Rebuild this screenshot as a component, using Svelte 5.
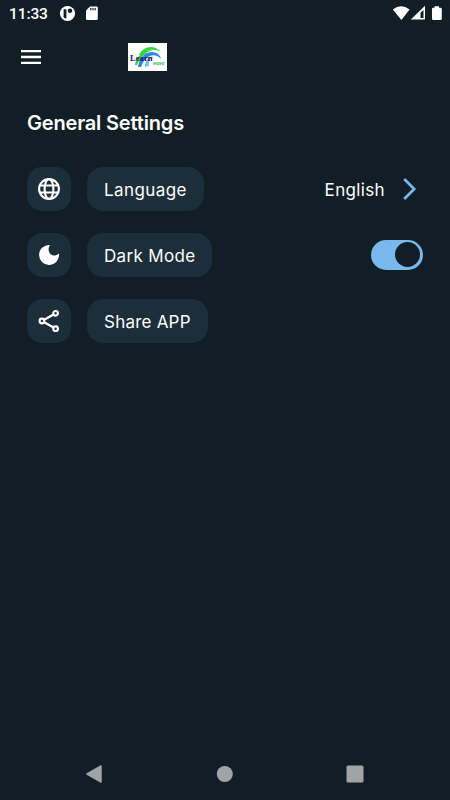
<script>
    let darkMode = true;

    const rows = [
        { id: 'language', label: 'Language', width: 117, spacing: 0.42 },
        { id: 'dark', label: 'Dark Mode', width: 125, spacing: 0.35 },
        { id: 'share', label: 'Share APP', width: 121, spacing: 0.22 },
    ];
</script>

<style>
    :global(body) {
        margin: 0;
        background: #111e26;
    }

    .screen {
        width: 450px;
        height: 800px;
        display: flex;
        flex-direction: column;
        overflow: hidden;
        background: #111e26;
        color: #fff;
        font-family: Inter, "Noto Sans", sans-serif;
    }

    svg {
        display: block;
        flex: none;
    }

    button {
        padding: 0;
        border: 0;
        background: none;
        color: inherit;
        font: inherit;
    }

    .status {
        height: 28px;
        box-sizing: border-box;
        padding: 0 6px 0 9px;
        display: flex;
        align-items: center;
        font: 500 15.5px/28px Roboto, sans-serif;
    }

    .time {
        width: 50px;
        white-space: nowrap;
        letter-spacing: -0.1px;
    }

    .signals {
        margin-left: auto;
    }

    .topbar {
        height: 58px;
        box-sizing: border-box;
        padding-left: 21px;
        display: flex;
        align-items: center;
    }

    .logo {
        margin-left: 87px;
    }

    main {
        flex: 1;
        padding: 23px 27px 0;
    }

    h1 {
        margin: 0 0 30px;
        height: 28px;
        font-size: 20px;
        line-height: 28px;
        font-weight: 600;
        letter-spacing: -0.17px;
        white-space: nowrap;
    }

    .rows {
        display: flex;
        flex-direction: column;
        gap: 21.8px;
    }

    .row {
        height: 44px;
        display: flex;
        align-items: center;
    }

    .tile {
        width: 44px;
        height: 44px;
        display: grid;
        place-items: center;
        border-radius: 15px;
        background: #1b2e39;
    }

    .label {
        height: 44px;
        margin-left: 16px;
        box-sizing: border-box;
        padding-left: 17px;
        border-radius: 16px;
        background: #1b2e39;
        font-size: 17px;
        line-height: 46px;
        white-space: nowrap;
    }

    .value {
        margin-left: auto;
        padding-right: 6px;
        display: flex;
        align-items: center;
        gap: 17px;
        font-size: 17px;
        line-height: 46px;
        letter-spacing: 0.35px;
    }

    .value span {
        padding-top: 1px;
    }

    .switch {
        width: 52px;
        height: 30px;
        margin-left: auto;
        padding: 3px;
        display: flex;
        align-items: center;
        border-radius: 15px;
        background: #3c4f5b;
    }

    .switch.on {
        justify-content: flex-end;
        background: #78b8ec;
    }

    .thumb {
        width: 25px;
        height: 25px;
        border-radius: 50%;
        background: #111e26;
    }

    .navbar {
        height: 53px;
        box-sizing: border-box;
        padding: 0 86px;
        display: flex;
        align-items: center;
        justify-content: space-between;
    }
</style>

<div class="screen">
    <div class="status">
        <span class="time">11:33</span>
        <svg width="42" height="28" viewBox="59 0 42 28">
            <circle cx="67.5" cy="13.5" r="7.6" fill="#fff" />
            <path d="M63.6 9.2h2.8v9h-1.6l-1.2-1z" fill="#111e26" />
            <circle cx="70" cy="10.8" r="2.2" fill="#111e26" />
            <path d="M90 6.5h6.5q1.3 0 1.3 1.3v10.9q0 1.3-1.3 1.3h-9.2q-1.3 0-1.3-1.3v-8.2z" fill="#fff" />
            <path d="M90.8 8v2.2M93 8v2.2M95.2 8v2.2" stroke="#111e26" stroke-width="1.2" />
        </svg>
        <svg class="signals" width="54" height="28" viewBox="390 0 54 28">
            <path d="M392.8 9.6q8.4-6.7 16.8 0L401.4 20z" fill="#fff" />
            <path d="M410.8 19.5L425 5.8v13.7z" fill="#fff" />
            <path d="M420.5 12.5l3-2.4v8h-3z" fill="#111e26" />
            <path d="M434.5 7.8v-1.5h4.5v1.5h1.3q1.5 0 1.5 1.2v9.8q0 1.2-1.3 1.2h-7.3q-1.2 0-1.2-1.2V9q0-1.2 1.2-1.2z" fill="#fff" />
        </svg>
    </div>

    <div class="topbar">
        <button aria-label="Menu">
            <svg width="20" height="14" viewBox="0 0 20 14">
                <path d="M0 1.2h20M0 7h20M0 12.8h20" stroke="#fff" stroke-width="2.3" />
            </svg>
        </button>
        <svg class="logo" width="39" height="28" viewBox="0 0 39 28">
            <rect width="39" height="28" fill="#fff" />
            <path d="M11 12C15 3 26 1 33 9C26 5 18 6 14 13z" fill="#35d83c" />
            <path d="M7 22C8 14 15 7 25 7C18 9 12 14 9 22z" fill="#35d83c" />
            <path d="M10 24C11 15 17 9 24 9C29 9 32 12 33 16C28 10 18 10 13 24z" fill="#3187e8" />
            <path d="M17 24C17 17 21 13 26 14C22 15 20 18 21 23z" fill="#75b9f5" />
            <text x="2" y="17.6" font-family="Liberation Serif, serif" font-size="9" font-weight="700" textLength="22.5" lengthAdjust="spacingAndGlyphs" fill="#151552">Learn</text>
            <text x="25" y="21.5" font-family="Liberation Serif, serif" font-size="6" font-weight="700" font-style="italic" textLength="11.5" lengthAdjust="spacingAndGlyphs" fill="#2bae58">wave</text>
        </svg>
    </div>

    <main>
        <h1>General Settings</h1>
        <div class="rows">
            {#each rows as row}
                <div class="row">
                    <div class="tile">
                        {#if row.id == 'language'}
                            <svg width="22" height="22" viewBox="0 0 22 22" fill="none" stroke="#fff" stroke-width="2.1">
                                <circle cx="11" cy="11" r="9.9" />
                                <ellipse cx="11" cy="11" rx="4.4" ry="9.9" />
                                <path d="M2 7.5h18M2 14.5h18" />
                            </svg>
                        {:else if row.id == 'dark'}
                            <svg width="22" height="22" viewBox="0 0 22 22">
                                <path d="M12 1C10 4 10 8.5 13 10.6C15.5 12.2 18.7 11.5 21 9.6A10 10 0 1 1 12 1z" fill="#fff" />
                            </svg>
                        {:else}
                            <svg width="22" height="24" viewBox="0 0 22 24" fill="none" stroke="#fff" stroke-width="2.2">
                                <path d="M6.2 10.8l8.9-5.1M6.2 13.2l8.9 5.1" />
                                <circle cx="3.9" cy="12" r="2.3" />
                                <circle cx="17.6" cy="4.3" r="2.3" />
                                <circle cx="17.6" cy="19.7" r="2.3" />
                            </svg>
                        {/if}
                    </div>
                    <div class="label" style="width: {row.width}px; letter-spacing: {row.spacing}px">{row.label}</div>
                    {#if row.id == 'language'}
                        <div class="value">
                            <span>English</span>
                            <svg width="15" height="22" viewBox="0 0 15 22">
                                <path d="M2.2 1L12.2 11L2.2 21" fill="none" stroke="#78b8ec" stroke-width="2.7" />
                            </svg>
                        </div>
                    {:else if row.id == 'dark'}
                        <button
                            class="switch"
                            class:on={darkMode}
                            aria-label="Dark Mode"
                            on:click={() => { darkMode = !darkMode }}
                        >
                            <span class="thumb"></span>
                        </button>
                    {/if}
                </div>
            {/each}
        </div>
    </main>

    <div class="navbar">
        <svg width="16" height="20" viewBox="0 0 16 20">
            <path d="M1 10L15 2v16z" fill="#9fa4a7" stroke="#9fa4a7" stroke-width="1.5" stroke-linejoin="round" />
        </svg>
        <svg width="18" height="18" viewBox="0 0 18 18">
            <circle cx="9.8" cy="9" r="8" fill="#9fa4a7" />
        </svg>
        <svg width="18" height="18" viewBox="0 0 18 18">
            <rect x=".5" y=".5" width="17" height="17" rx="1.5" fill="#9fa4a7" />
        </svg>
    </div>
</div>
